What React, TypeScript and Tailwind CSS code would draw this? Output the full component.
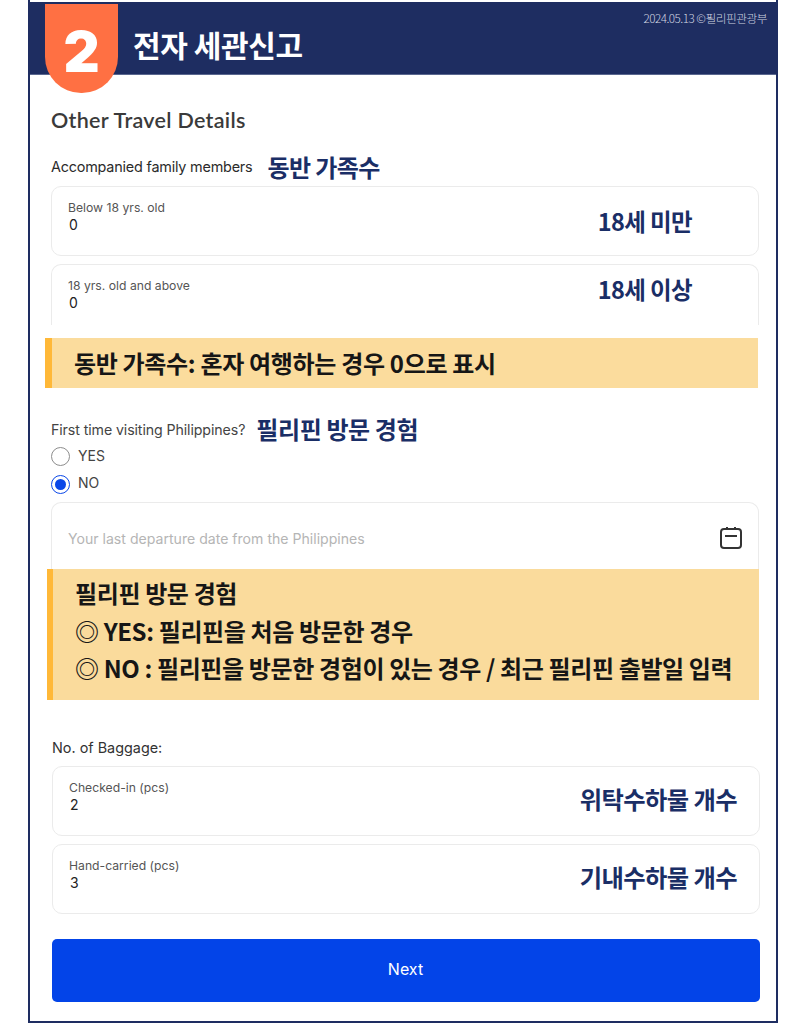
const KR = "font-['Noto_Sans_CJK_KR',sans-serif]";

function NumberCard({ label, value, note, open, wide }: { label: string; value: string; note: string; open?: boolean; wide?: boolean }) {
  return (
    <div
      className={`flex justify-between bg-white border border-[#ebebeb] pl-4 ${wide ? 'pr-[66px]' : 'pr-[22px]'} ${
        open ? 'h-[61px] rounded-t-[10px] border-b-0' : 'h-[70px] rounded-[10px]'
      }`}
    >
      <div className="pt-[13px]">
        <div className="text-[12.2px] leading-[16px] text-[#555]">{label}</div>
        <div className="text-[14px] leading-[20px] mt-[-1px] pl-[1px] text-[#222]">{value}</div>
      </div>
      <div
        className={`${KR} leading-[30px] font-semibold tracking-[-0.6px] text-[#1a2e66] ${wide ? 'text-[23.5px]' : 'text-[24.3px] mt-[-4px]'} ${
          open ? 'mt-[9px]' : 'self-center'
        }`}
      >
        {note}
      </div>
    </div>
  );
}

function Radio({ label, checked }: { label: string; checked?: boolean }) {
  return (
    <div className="flex items-center gap-[8px] h-[27px]">
      <div
        className={`w-[19px] h-[19px] rounded-full border-[1.5px] flex items-center justify-center ${
          checked ? 'border-[#0a47e8] mt-[1px]' : 'border-[#8d8d8d]'
        }`}
      >
        {checked && <div className="w-[11px] h-[11px] rounded-full bg-[#0a47e8]" />}
      </div>
      <span className="text-[14px] text-[#444] mt-[-2px]">{label}</span>
    </div>
  );
}

function CalendarIcon() {
  return (
    <svg viewBox="0 0 24 24" className="w-[24px] h-[24px] text-[#333]" fill="none" stroke="currentColor" strokeWidth="2">
      <rect x="2" y="3" width="20" height="19" rx="3" />
      <path d="M8 1v3M16 1v3M6 10h12" />
    </svg>
  );
}

export default function App() {
  return (
    <div className="w-[787px] h-[1023px] bg-white overflow-hidden font-['Inter',sans-serif]">
      <div className="relative ml-[28px] w-[750px] h-[1023px] border-x-2 border-b-[2px] border-[#1e2d61] pt-[2px]">
        <header className="relative h-[73px] bg-[#1e2d61] border-b border-[#5a678f] flex items-center pl-[103px]">
          <div className="absolute left-[15px] top-[2px] w-[73px] h-[89px] bg-[#ff7043] rounded-b-[36px] flex items-center justify-center pt-[7px] text-[56px] font-black text-white leading-none">
            2
          </div>
          <h1 className={`${KR} text-[30px] font-semibold tracking-[-0.4px] text-white mt-[13px]`}>전자 세관신고</h1>
          <div className={`${KR} absolute right-[9px] top-[8px] text-[11.7px] leading-[16px] font-light tracking-[-0.5px] text-[#d0d4e0]`}>
            2024.05.13 ©필리핀관광부
          </div>
        </header>

        <main>
          <div className="pl-[21px] pr-[17px]">
            <h2 className="font-['Lato',sans-serif] text-[21.5px] leading-[28px] font-semibold tracking-[0.3px] text-[#3a3a3a] mt-[31px]">
              Other Travel Details
            </h2>
            <div className="flex items-center gap-[15px] h-[30px] mt-[18px]">
              <span className="text-[14.4px] tracking-[-0.2px] text-[#2b2b2b] mt-[-1px]">Accompanied family members</span>
              <span className={`${KR} text-[24px] font-semibold tracking-[-0.6px] text-[#1a2e66]`}>동반 가족수</span>
            </div>
            <div className="flex flex-col gap-[8px] mt-[4px]">
              <NumberCard label="Below 18 yrs. old" value="0" note="18세 미만" wide />
              <NumberCard label="18 yrs. old and above" value="0" note="18세 이상" open wide />
            </div>
          </div>

          <div className={`${KR} ml-[15px] mr-[18px] mt-[13px] h-[50px] bg-[#fbdc9d] border-l-[7px] border-[#ffb838] pl-[22px] flex items-center text-[24px] font-semibold tracking-[-0.33px] text-[#161616]`}>
            동반 가족수: 혼자 여행하는 경우 0으로 표시
          </div>

          <div className="pl-[21px] pr-[17px]">
            <div className="flex items-center gap-[11px] h-[30px] mt-[26px]">
              <span className="text-[14.2px] tracking-[-0.1px] text-[#444] mt-[1px]">First time visiting Philippines?</span>
              <span className={`${KR} text-[24px] font-semibold tracking-[-0.4px] text-[#1a2e66]`}>필리핀 방문 경험</span>
            </div>
            <div className="mt-[-1px]">
              <Radio label="YES" />
              <Radio label="NO" checked />
            </div>
            <div className="flex items-center justify-between h-[67px] mt-[5px] pl-4 pr-[15px] pt-[3px] border border-b-0 border-[#ebebeb] rounded-t-[10px]">
              <span className="text-[14.1px] text-[#b5b5b5] mt-[2px]">Your last departure date from the Philippines</span>
              <CalendarIcon />
            </div>
          </div>

          <div className={`${KR} ml-[17px] mr-[17px] h-[131px] bg-[#fadb9c] border-l-[6px] border-[#ffb838] pl-[22px] pt-[5px] text-[24px] leading-[38px] font-semibold tracking-[-0.38px] text-[#161616]`}>
            <div>필리핀 방문 경험</div>
            <div>◎ YES: 필리핀을 처음 방문한 경우</div>
            <div className="mt-[-1px]">◎ NO : 필리핀을 방문한 경험이 있는 경우 / 최근 필리핀 출발일 입력</div>
          </div>

          <div className="pl-[22px] pr-[16px]">
            <div className="text-[14.4px] leading-[20px] text-[#333] mt-[38px]">No. of Baggage:</div>
            <div className="flex flex-col gap-[8px] mt-[8px]">
              <NumberCard label="Checked-in (pcs)" value="2" note="위탁수하물 개수" />
              <NumberCard label="Hand-carried (pcs)" value="3" note="기내수하물 개수" />
            </div>
            <button className="w-full h-[63px] mt-[25px] pb-[3px] pr-[1px] rounded-[5px] bg-[#0344e8] text-white text-[16px]">Next</button>
          </div>
        </main>
      </div>
    </div>
  );
}
